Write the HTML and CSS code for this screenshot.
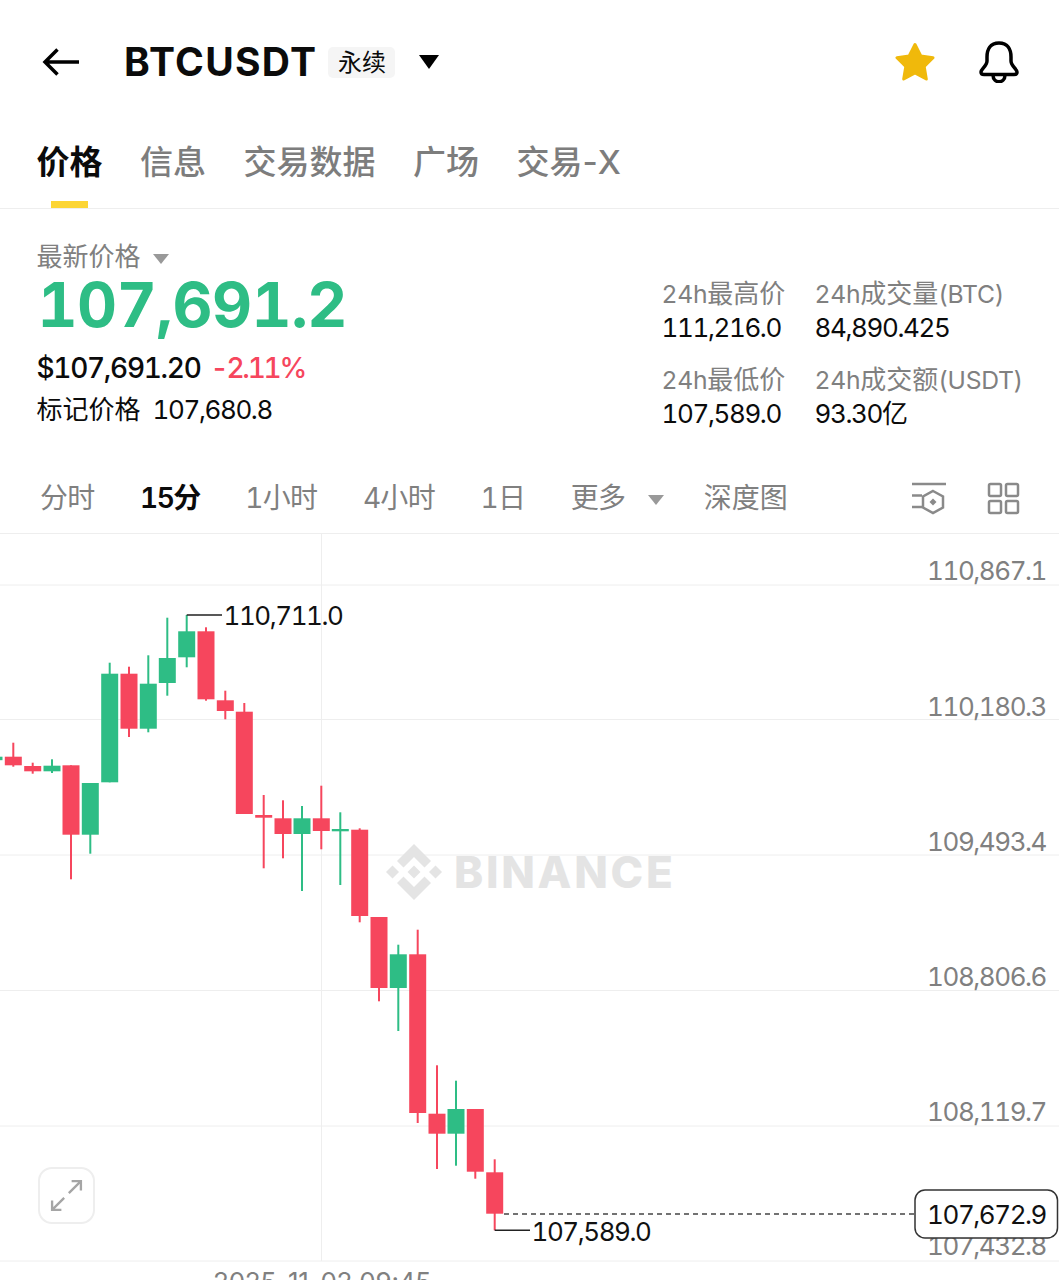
FILE: index.html
```html
<!DOCTYPE html>
<html lang="zh-CN">
<head>
    <meta charset="UTF-8">
    <meta name="viewport" content="width=device-width, initial-scale=1.0">
    <title>BTCUSDT</title>
    <link rel="stylesheet" href="styles.css">
</head>
<body>
    <header class="topbar">
        <svg class="icon-back" viewBox="0 0 38 30" aria-hidden="true"><path d="M37 15H3M15.500 2.500L3 15l12.500 12.500"/></svg>
        <h1 class="symbol">BTCUSDT</h1>
        <span class="badge">永续</span>
        <span class="caret caret-black"></span>
        <svg class="icon-star" viewBox="0 0 40 40" aria-hidden="true"><path d="M20 2.500l5.800 11.400 12.200 1.800-8.800 8.700 2.100 12.600L20 31 8.700 37l2.100-12.600L2 15.700l12.200-1.800z"/></svg>
        <svg class="icon-bell" viewBox="0 0 40 42" aria-hidden="true"><path d="M20 2C11 2 8 9 8 16v4c0 5-6 8-6 11 0 2 1 2.500 3 2.500h30c2 0 3-.5 3-2.500 0-3-6-6-6-11v-4C32 9 29 2 20 2z"/><path d="M14 34c0 9 12 9 12 0"/></svg>
    </header>

    <nav class="tabs">
        <a class="tab active">价格</a>
        <a class="tab">信息</a>
        <a class="tab">交易数据</a>
        <a class="tab">广场</a>
        <a class="tab">交易-X</a>
    </nav>

    <section class="summary">
        <div class="price-col">
            <div class="price-label">最新价格<span class="caret caret-grey"></span></div>
            <div class="price-big">107,691.2</div>
            <div class="price-usd">$107,691.20<span class="change">-2.11%</span></div>
            <div class="price-mark">标记价格<span class="mark-value">107,680.8</span></div>
        </div>
        <div class="stats">
            <div class="stat"><div class="stat-label"><span class="latin">24h</span>最高价</div><div class="stat-value">111,216.0</div></div>
            <div class="stat"><div class="stat-label"><span class="latin">24h</span>成交量<span class="latin">(BTC)</span></div><div class="stat-value">84,890.425</div></div>
            <div class="stat"><div class="stat-label"><span class="latin">24h</span>最低价</div><div class="stat-value">107,589.0</div></div>
            <div class="stat"><div class="stat-label"><span class="latin">24h</span>成交额<span class="latin">(USDT)</span></div><div class="stat-value">93.30亿</div></div>
        </div>
    </section>

    <div class="toolbar">
        <span class="period">分时</span>
        <span class="period active">15分</span>
        <span class="period">1小时</span>
        <span class="period">4小时</span>
        <span class="period">1日</span>
        <span class="period">更多<span class="caret caret-grey"></span></span>
        <span class="period depth">深度图</span>
        <div class="tool-icons">
            <svg class="icon-tool icon-settings" viewBox="0 0 35 33" aria-hidden="true">
                <path d="M1 2H35M1 13.500H11M1 25H11"/>
                <path d="M22 9l10 5.500v11L22 31l-10-5.500v-11z"/>
                <path class="dot" d="M22 16.500l3.500 3.500-3.500 3.500-3.500-3.500z"/>
            </svg>
            <svg class="icon-tool icon-grid" viewBox="0 0 33 33" aria-hidden="true">
                <rect x="2" y="2" width="12" height="12" rx="1.500"/>
                <rect x="19" y="2" width="12" height="12" rx="1.500"/>
                <rect x="2" y="19" width="12" height="12" rx="1.500"/>
                <rect x="19" y="19" width="12" height="12" rx="1.500"/>
            </svg>
        </div>
    </div>

    <main class="chart">
        <!-- viewBox uses the page's y values so candles can be read off the screen -->
        <svg class="chart-svg" viewBox="0 534 1059 746">
            <g class="grid">
                <path d="M321.500 534V1261"/>
                <path d="M0 585H1059M0 719.500H1059M0 855H1059M0 990.500H1059M0 1126H1059M0 1261H1059"/>
            </g>

            <g class="watermark">
                <path d="M414 844l17 17-6.500 6.500L414 857l-10.500 10.500L397 861z"/>
                <path d="M414 900l17-17-6.500-6.500L414 887l-10.500-10.500L397 883z"/>
                <path d="M414 865.500l6.500 6.500-6.500 6.500-6.500-6.500z"/>
                <path d="M392.500 865.500l6.500 6.500-6.500 6.500-6.500-6.500z"/>
                <path d="M435.500 865.500l6.500 6.500-6.500 6.500-6.500-6.500z"/>
                <text x="454" y="888">BINANCE</text>
            </g>

            <g class="up">
                <rect x="-5" y="756.700" width="7.500" height="3.500"/>
                <rect x="51" y="759.300" width="2" height="13.700"/><rect x="43.500" y="765.700" width="17" height="5.600"/>
                <rect x="89.300" y="783" width="2" height="70.700"/><rect x="81.800" y="783" width="17" height="51.700"/>
                <rect x="108.700" y="662.700" width="2" height="119.600"/><rect x="101.200" y="673.700" width="17" height="108.600"/>
                <rect x="147.300" y="655.300" width="2" height="77"/><rect x="139.800" y="683.700" width="17" height="45"/>
                <rect x="166.300" y="617.700" width="2" height="78"/><rect x="158.800" y="658" width="17" height="25"/>
                <rect x="185.700" y="615" width="2" height="52.300"/><rect x="178.200" y="631.300" width="17" height="26"/>
                <rect x="301" y="806" width="2" height="85"/><rect x="293.500" y="818.300" width="17" height="15.700"/>
                <rect x="339.300" y="812.300" width="2" height="72.700"/><rect x="331.800" y="829" width="17" height="2.300"/>
                <rect x="397.300" y="944.700" width="2" height="86.300"/><rect x="389.800" y="954.300" width="17" height="33.700"/>
                <rect x="455" y="1080.700" width="2" height="85"/><rect x="447.500" y="1109" width="17" height="24.700"/>
            </g>

            <g class="down">
                <rect x="12.300" y="742.700" width="2" height="24"/><rect x="4.800" y="756.700" width="17" height="8.600"/>
                <rect x="31.700" y="762.700" width="2" height="11"/><rect x="24.200" y="766" width="17" height="5.300"/>
                <rect x="70" y="765.300" width="2" height="114"/><rect x="62.500" y="765.300" width="17" height="69.400"/>
                <rect x="128" y="666.700" width="2" height="70.300"/><rect x="120.500" y="673.700" width="17" height="55"/>
                <rect x="205" y="627.300" width="2" height="73.400"/><rect x="197.500" y="631.300" width="17" height="68"/>
                <rect x="224.300" y="690.700" width="2" height="28.600"/><rect x="216.800" y="700.300" width="17" height="10.700"/>
                <rect x="243.300" y="703" width="2" height="111"/><rect x="235.800" y="711.700" width="17" height="102.300"/>
                <rect x="262.700" y="795" width="2" height="73.300"/><rect x="255.200" y="815" width="17" height="2.700"/>
                <rect x="282" y="800.300" width="2" height="58"/><rect x="274.500" y="818.300" width="17" height="15.700"/>
                <rect x="320.300" y="785.700" width="2" height="63.600"/><rect x="312.800" y="818.300" width="17" height="12.700"/>
                <rect x="358.700" y="828.300" width="2" height="94"/><rect x="351.200" y="829.700" width="17" height="86.300"/>
                <rect x="378" y="917" width="2" height="84.300"/><rect x="370.500" y="917" width="17" height="71"/>
                <rect x="416.700" y="929.700" width="2" height="193.300"/><rect x="409.200" y="954.300" width="17" height="158.700"/>
                <rect x="436" y="1065.300" width="2" height="103.700"/><rect x="428.500" y="1113.700" width="17" height="20"/>
                <rect x="474.300" y="1109" width="2" height="69.700"/><rect x="466.800" y="1109" width="17" height="62.700"/>
                <rect x="493.700" y="1159.300" width="2" height="71"/><rect x="486.200" y="1172.300" width="17" height="41.400"/>
            </g>

            <path class="leader" d="M186.700 615H222M494.700 1230.300H530"/>
            <path class="last-line" d="M504 1214H914"/>

            <text class="mark-text" x="223.500" y="625">110,711.0</text>
            <text class="mark-text" x="531.500" y="1241">107,589.0</text>

            <g class="axis">
                <text x="1046" y="580">110,867.1</text>
                <text x="1046" y="716">110,180.3</text>
                <text x="1046" y="851">109,493.4</text>
                <text x="1046" y="986">108,806.6</text>
                <text x="1046" y="1121">108,119.7</text>
                <text x="1046" y="1255">107,432.8</text>
            </g>

            <rect class="last-tag" x="915" y="1190" width="142.500" height="48" rx="10"/>
            <text class="mark-text last-text" x="1046" y="1224">107,672.9</text>

            <text class="date" x="213" y="1291">2025-11-02 09:45</text>
        </svg>

        <button class="expand" aria-label="全屏">
            <svg viewBox="0 0 57 57" aria-hidden="true"><path d="M31 26L44 13M34 13h10v10M26 31L13 44M23 44H13V34"/></svg>
        </button>
    </main>
</body>
</html>
```

FILE: styles.css
```css
* {
    box-sizing: border-box;
}
html, body {
    height: 1280px;
    overflow: hidden;
}
body {
    margin: 0;
    background: #fff;
    color: #0b0b0b;
    font-family: Inter, "Noto Sans CJK SC", sans-serif;
    font-variant-numeric: tabular-nums;
}

.caret {
    display: inline-block;
    width: 0;
    height: 0;
    border-style: solid;
    border-color: transparent;
    border-bottom-width: 0;
}
.caret-black {
    border-width: 14px 10.5px 0;
    border-top-color: #000;
    margin-left: 24px;
}
.caret-grey {
    border-width: 10px 8.500px 0;
    border-top-color: #999;
    margin-left: 12px;
    vertical-align: middle;
}

/* top bar */
.topbar {
    display: flex;
    align-items: center;
    height: 124px;
    padding: 0 40px 0 42px;
}
.icon-back {
    width: 38px;
    height: 30px;
    margin-right: 44px;
    fill: none;
    stroke: #000;
    stroke-width: 3.500;
}
.symbol {
    margin: 0 11px 0 0;
    font-size: 39px;
    line-height: 46px;
    font-weight: 700;
    letter-spacing: 1.300px;
}
.badge {
    display: flex;
    align-items: center;
    justify-content: center;
    width: 67px;
    height: 31px;
    padding-bottom: 4px;
    background: #f5f5f5;
    border-radius: 5px;
    font-size: 24px;
}
.icon-star {
    width: 40px;
    height: 40px;
    margin-left: auto;
    fill: #f0b90b;
    stroke: #f0b90b;
    stroke-width: 3;
    stroke-linejoin: round;
}
.icon-bell {
    width: 40px;
    height: 42px;
    margin-left: 44px;
    fill: none;
    stroke: #000;
    stroke-width: 3.500;
}

/* tabs */
.tabs {
    display: flex;
    gap: 37.500px;
    height: 85px;
    padding-left: 36.500px;
    border-bottom: 1px solid #eee;
    font-variant-numeric: normal;
}
.tab {
    position: relative;
    padding-top: 14px;
    font-size: 33px;
    line-height: 48px;
    font-weight: 500;
    color: #7d7d7d;
}
.tab.active {
    color: #0b0b0b;
    font-weight: 600;
}
.tab.active::after {
    content: "";
    position: absolute;
    left: 14px;
    bottom: 0;
    width: 37px;
    height: 7px;
    background: #fcd535;
}

/* price summary */
.summary {
    display: flex;
    height: 256px;
    padding: 30px 0 0 36.500px;
}
.price-col {
    flex: 0 0 625px;
}
.price-label {
    font-size: 26px;
    line-height: 36px;
    color: #808080;
}
.price-big {
    height: 60px;
    margin-left: 1px;
    font-size: 62px;
    line-height: 60px;
    font-weight: 700;
    letter-spacing: -0.500px;
    color: #2ebd85;
}
.price-usd {
    margin-top: 16px;
    font-size: 28px;
    line-height: 34px;
    font-weight: 500;
    letter-spacing: -1.300px;
}
.change {
    margin-left: 10px;
    letter-spacing: -2.200px;
    color: #f6465d;
}
.price-mark {
    margin-top: 8px;
    font-size: 26px;
    line-height: 34px;
}
.mark-value {
    margin-left: 12px;
    letter-spacing: -1.400px;
}
.stats {
    display: grid;
    grid-template-columns: 153px auto;
    row-gap: 18px;
    align-content: start;
    padding-top: 38px;
}
.stat-label {
    font-size: 26px;
    line-height: 34px;
    color: #808080;
}
.stat-label .latin {
    font-size: 24.700px;
    letter-spacing: -0.300px;
}
.stat-value {
    font-size: 26px;
    line-height: 34px;
    letter-spacing: -1.400px;
}

/* period toolbar */
.toolbar {
    display: flex;
    align-items: center;
    gap: 45.500px;
    height: 69px;
    padding: 0 39px 1px 40px;
    border-bottom: 1px solid #eee;
    font-size: 28px;
    color: #808080;
}
.period {
    margin-bottom: 6px;
    letter-spacing: -0.700px;
}
.period.active {
    color: #0b0b0b;
    font-weight: 600;
    letter-spacing: -1.500px;
}
.period .caret {
    margin-left: 23px;
}
.depth {
    margin-left: -6px;
    letter-spacing: 0;
}
.tool-icons {
    display: flex;
    align-items: center;
    gap: 41px;
    margin-left: auto;
}
.icon-tool {
    height: 33px;
    fill: none;
    stroke: #8a8a8a;
    stroke-width: 2.500;
}
.icon-settings {
    width: 35px;
}
.icon-grid {
    width: 33px;
}
.icon-settings .dot {
    fill: #8a8a8a;
    stroke: none;
}

/* chart */
.chart {
    position: relative;
    height: 746px;
}
.chart-svg {
    display: block;
    width: 1059px;
    height: 746px;
    overflow: hidden;
}
.grid path {
    fill: none;
    stroke: #eee;
    stroke-width: 1;
}
.up rect {
    fill: #2ebd85;
}
.down rect {
    fill: #f6465d;
}
.watermark path {
    fill: #e4e4e4;
}
.watermark text {
    fill: #e4e4e4;
    font-size: 44px;
    font-weight: 800;
    letter-spacing: 2.700px;
}
.leader {
    fill: none;
    stroke: #222;
    stroke-width: 1.500;
}
.last-line {
    fill: none;
    stroke: #444;
    stroke-width: 1.500;
    stroke-dasharray: 5 4;
}
.mark-text {
    font-size: 26px;
    letter-spacing: -1.450px;
    fill: #111;
}
.axis text {
    font-size: 26px;
    letter-spacing: -1.450px;
    fill: #808080;
    text-anchor: end;
}
.last-tag {
    fill: #fff;
    stroke: #333;
    stroke-width: 1.500;
}
.last-text {
    text-anchor: end;
}
.date {
    font-size: 26px;
    font-variant-numeric: normal;
    letter-spacing: -0.200px;
    fill: #808080;
}
.expand {
    position: absolute;
    left: 38px;
    top: 633px;
    width: 57px;
    height: 57px;
    padding: 0;
    background: #fff;
    border: 2px solid #eee;
    border-radius: 14px;
}
.expand svg {
    display: block;
    width: 53px;
    height: 53px;
    fill: none;
    stroke: #a5a5a5;
    stroke-width: 2.500;
}
```
